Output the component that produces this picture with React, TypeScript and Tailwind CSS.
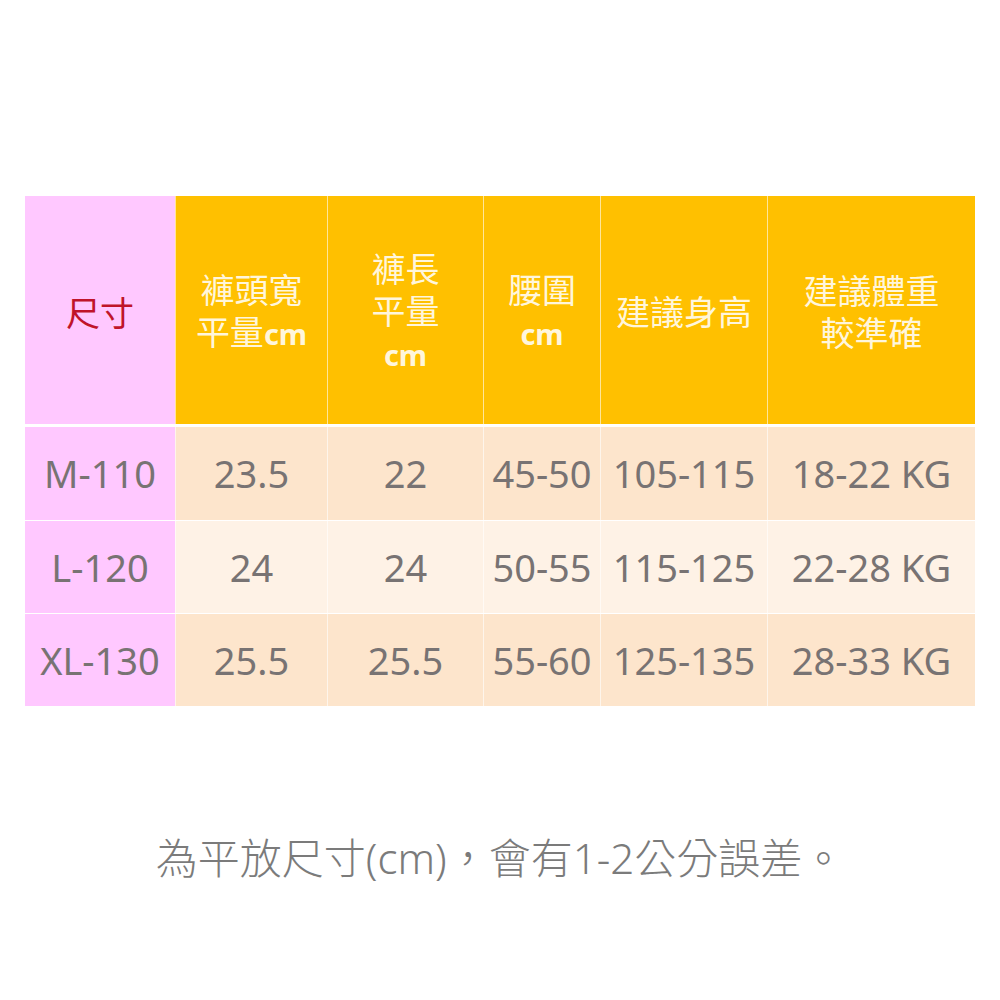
const font = { fontFamily: '"Noto Sans", "Noto Sans CJK TC", sans-serif' };

const cols = ["w-[150px]", "w-[152px]", "w-[156px]", "w-[117px]", "w-[167px]", "w-[208px]"];

const rows = [
  ["M-110", "23.5", "22", "45-50", "105-115", "18-22 KG"],
  ["L-120", "24", "24", "50-55", "115-125", "22-28 KG"],
  ["XL-130", "25.5", "25.5", "55-60", "125-135", "28-33 KG"],
];

function Cm() {
  return <span className="font-bold text-[29px]">cm</span>;
}

export default function App() {
  const headers = [
    <>褲頭寬<br />平量<Cm /></>,
    <>褲長<br />平量<br /><Cm /></>,
    <>腰圍<br /><Cm /></>,
    <>建議身高</>,
    <>建議體重<br />較準確</>,
  ];

  return (
    <div className="w-[1000px] h-[1000px] bg-white pt-[196px] pl-[25px]" style={font}>
      <div className="w-[950px]">
        <div className="flex h-[231px] border-b-[3px] border-white">
          <div className={`${cols[0]} bg-[#ffc8ff] flex items-center justify-center pt-[6px] text-[34px] text-[#c0142a]`}>
            尺寸
          </div>
          {headers.map((h, i) => (
            <div
              key={i}
              className={`${cols[i + 1]} bg-[#ffc000] border-l border-white/60 flex items-center justify-center pt-[4px] text-center text-[34px] leading-[42px] text-[#fff6dc]`}
            >
              <div>{h}</div>
            </div>
          ))}
        </div>
        {rows.map((r, ri) => (
          <div
            key={ri}
            className={`flex h-[93px] ${ri > 0 ? "border-t border-white/60" : ""} text-[38px] text-[#787373]`}
          >
            {r.map((v, ci) => (
              <div
                key={ci}
                className={`${cols[ci]} flex items-center justify-center ${
                  ci === 0
                    ? "bg-[#ffc8ff]"
                    : `border-l border-white/60 ${ri === 1 ? "bg-[#fef2e6]" : "bg-[#fde5cc]"}`
                }`}
              >
                {v}
              </div>
            ))}
          </div>
        ))}
      </div>
      <div className="w-[950px] mt-[124px] text-center text-[42px] leading-[56px] font-light text-[#7b7b7b]">
        為平放尺寸(cm)，會有1-2公分誤差。
      </div>
    </div>
  );
}
